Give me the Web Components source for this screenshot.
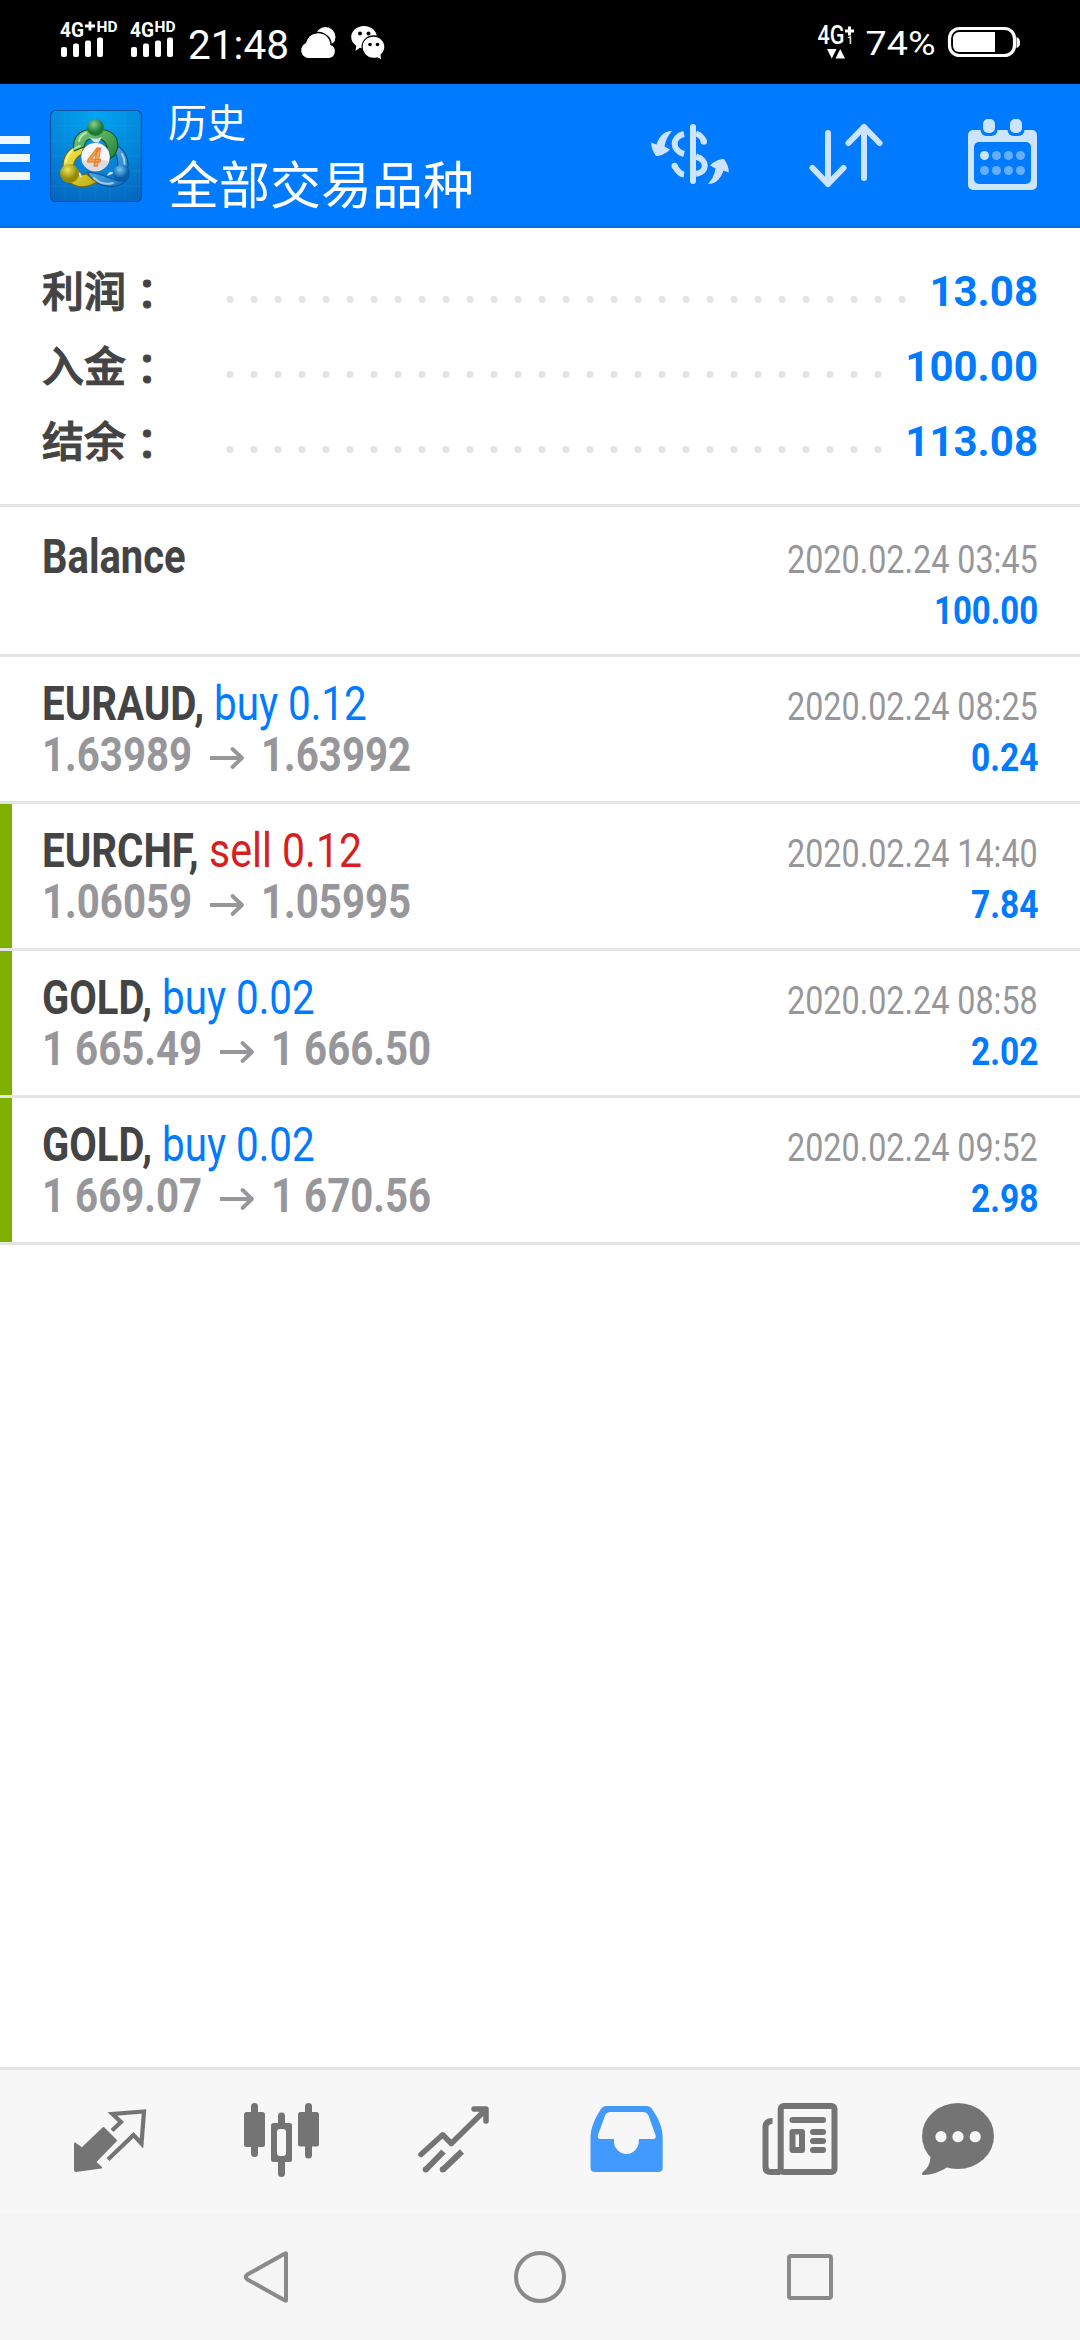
<!DOCTYPE html>
<html lang="zh-CN">
<head>
<meta charset="utf-8">
<title>历史</title>
<style>
html,body{margin:0;padding:0;background:#fff}
body{width:1080px;height:2340px;overflow:hidden;font-family:Roboto,"Noto Sans CJK SC",sans-serif}
</style>
</head>
<body>
<trade-app></trade-app>
<script>
const define = (name, css, html, extra) => {
  const tpl = document.createElement('template');
  tpl.innerHTML = `<style>*{box-sizing:border-box}svg{display:block}${css}</style>${html}`;
  customElements.define(name, class extends HTMLElement {
    connectedCallback() {
      if (this.shadowRoot) return;
      this.attachShadow({mode: 'open'}).appendChild(tpl.content.cloneNode(true));
      if (extra) extra(this, this.shadowRoot);
    }
  });
};

/* Condensed text: squeezes its content horizontally to the width in "w". */
define('cond-text',
  `:host{display:inline-block;white-space:pre}
   span{display:inline-block;transform-origin:0 50%}`,
  `<span><slot></slot></span>`,
  (host, root) => {
    const s = root.querySelector('span');
    const w = +host.getAttribute('w');
    host.style.width = w + 'px';
    s.style.transform = `scaleX(${w / s.offsetWidth})`;
  });

define('status-bar',
  `:host{display:flex;justify-content:space-between;height:84px;background:#000;flex:none}
   text{font-family:Roboto,sans-serif;fill:#fff}`,
  `<svg width="400" height="84" viewBox="0 0 400 84" fill="#fff">
    <text x="60" y="37" font-size="21" font-weight="700" textLength="24" lengthAdjust="spacingAndGlyphs">4G</text>
    <path d="M85 26h10M90 21.500v9" stroke="#fff" stroke-width="2.800"/>
    <text x="96.500" y="32" font-size="14" font-weight="700" textLength="21" lengthAdjust="spacingAndGlyphs">HD</text>
    <g id="b"><rect x="61" y="47" width="6" height="10" rx="2"/><rect x="73" y="43.500" width="6" height="13.500" rx="2"/><rect x="85" y="40.500" width="6" height="16.500" rx="2"/><rect x="97" y="37.500" width="6" height="19.500" rx="2"/></g>
    <text x="130" y="37" font-size="21" font-weight="700" textLength="24" lengthAdjust="spacingAndGlyphs">4G</text>
    <text x="154.500" y="32" font-size="14" font-weight="700" textLength="21" lengthAdjust="spacingAndGlyphs">HD</text>
    <use href="#b" x="70"/>
    <text x="188" y="59" font-size="40.500" textLength="101" lengthAdjust="spacingAndGlyphs">21:48</text>
    <circle cx="325.500" cy="37" r="10"/>
    <path d="M309.500 58a7.800 7.800 0 0 1-3.500-15 12.500 12.500 0 0 1 23-3.500c1 2 1.300 3.500 1.300 5.500a6.700 6.700 0 0 1-1.300 13z" stroke="#000" stroke-width="3" paint-order="stroke"/>
    <path d="M331 44l4 2v-4z" fill="#000"/>
    <path d="M364 26c7.500 0 12.800 5 12.800 11s-5.300 11.500-12.800 11.500c-1.500 0-3-.3-4.200-.7L355.500 51l.7-5.200c-3-2-5-5-5-8.800 0-6 5.500-11 12.800-11z"/>
    <ellipse cx="373.500" cy="47" rx="12" ry="11.800" fill="#000"/>
    <path d="M373.500 36.800c6.200 0 10.800 4.500 10.800 10 0 3.300-1.500 6-3.800 7.900l.6 4.500-3.800-2c-1.200.4-2.500.6-3.800.6-6.200 0-10.800-5-10.800-11s4.600-10 10.800-10z"/>
    <g fill="#000"><circle cx="360" cy="33.500" r="2"/><circle cx="368.500" cy="33.500" r="2"/><circle cx="370" cy="44.500" r="1.800"/><circle cx="377.500" cy="44.500" r="1.800"/></g>
  </svg>
  <svg width="280" height="84" viewBox="800 0 280 84" fill="#fff">
    <text x="817.500" y="44" font-size="25" font-weight="500" textLength="27" lengthAdjust="spacingAndGlyphs">4G</text>
    <path d="M845 31h9M849.500 26.500v9" stroke="#fff" stroke-width="3"/>
    <text x="847" y="44" font-size="10.500" font-weight="500">1</text>
    <path d="M827 49h9.500l-4.750 9.500zM835.500 58.500h9.500l-4.750-9.500z"/>
    <text x="865.500" y="55" font-size="34" textLength="70" lengthAdjust="spacingAndGlyphs">74%</text>
    <rect x="949.500" y="28.500" width="65" height="27" rx="10" fill="none" stroke="#fff" stroke-width="3.200"/>
    <path d="M995 32h-36a6 6 0 0 0-6 6v8a6 6 0 0 0 6 6h36z"/>
    <path d="M1016.500 37q3.500 1 3.500 5.500t-3.500 5.500z"/>
  </svg>`);

define('app-logo',
  `:host{display:block;width:94px;height:94px}`,
  `<svg width="94" height="94" viewBox="49 109 94 94">
    <defs>
      <radialGradient id="bg" cx=".5" cy="0" r="1.050"><stop offset="0" stop-color="#00a6f2"/><stop offset=".5" stop-color="#0489dc"/><stop offset="1" stop-color="#0568c0"/></radialGradient>
      <linearGradient id="g" x2="1" y2="1"><stop offset="0" stop-color="#7fd07f"/><stop offset="1" stop-color="#1d7c30"/></linearGradient>
      <linearGradient id="y" x2="1" y2="1"><stop offset="0" stop-color="#fbee4a"/><stop offset="1" stop-color="#b9aa18"/></linearGradient>
      <linearGradient id="u" x2="1" y2="1"><stop offset="0" stop-color="#6fccf7"/><stop offset="1" stop-color="#0f6cbf"/></linearGradient>
      <radialGradient id="gs" cx=".4" cy=".3"><stop offset="0" stop-color="#86cf8d"/><stop offset="1" stop-color="#1c7a37"/></radialGradient>
      <radialGradient id="ys" cx=".4" cy=".3"><stop offset="0" stop-color="#efe75c"/><stop offset="1" stop-color="#938a0a"/></radialGradient>
      <radialGradient id="us" cx=".4" cy=".3"><stop offset="0" stop-color="#6fc9f3"/><stop offset="1" stop-color="#0a5cab"/></radialGradient>
    </defs>
    <rect x="50.500" y="110.500" width="91" height="91" rx="5" fill="url(#bg)" stroke="#07509f" stroke-width="1.200"/>
    <path d="M65 111v90M80 111v90M95 111v90M110 111v90M125 111v90M51 126h90M51 141h90M51 156h90M51 171h90M51 186h90" stroke="#45b7f5" stroke-width=".6" opacity=".22"/>
    <g stroke-linejoin="round" stroke-width="1.200">
      <path d="M115 145c8 3 13 11 13 20 0 3-1 5-3 6l-8-3c2-7 0-15-6-20zM87 172c7 1 14 2 20 5l12 4c4 0 7-1 9-3-4 6-11 9-19 8.500-10-1-18-7-22-14.500z" fill="url(#u)" stroke="#0a4f94"/>
      <path d="M85 143c-13 2-22 11-22 22 0 4 2 7 5 8 3-3 5-2 7-1-4-6 0-14 7-18zM66 178c5 8 16 11 25 7l6-3c-5-2-7-5-10-8l-11 2z" fill="url(#y)" stroke="#706a0b"/>
      <path d="M86 130c-10 3-14 11-12 21l10-4c1-5 4-8 7-8h10c5 3 9 9 4 22l9-5c7-11 4-23-9-26z" fill="url(#g)" stroke="#0d5322"/>
    </g>
    <path d="M66 162c1-8 7-14 14-16M122 154q3 5 2.500 10M79 141c1-4 4-7 7-8M94 178c5 5 12 7 19 5" fill="none" stroke="#fff" stroke-width="2" opacity=".55" stroke-linecap="round"/>
    <path d="M75 172q6-2 7 6M114 173q-5-3-7 3M89 137q6 3 13 0l-5 8z" fill="#f4f8ef" opacity=".85"/>
    <circle cx="95.500" cy="127.500" r="8.500" fill="url(#gs)"/>
    <circle cx="69.500" cy="173.500" r="9.500" fill="url(#ys)"/>
    <circle cx="121.500" cy="173" r="8.500" fill="url(#us)"/>
    <circle cx="95.500" cy="157" r="14.600" fill="#f7f6f8" stroke="#0a4a80" stroke-opacity=".45"/>
    <path d="M82 161q13-3 27 0a14 14 0 0 1-27 0z" fill="#dcdce0"/>
    <text x="87.500" y="165.500" font-family="Roboto,sans-serif" font-weight="700" font-style="italic" font-size="25" fill="#f9a94c" stroke="#e0762a" stroke-width=".9">4</text>
  </svg>`);

define('app-header',
  `:host{display:flex;height:144px;flex:none;background:#007aff;border-bottom:3px solid #006fe6;color:#fff}
   .menu{width:30px;margin:52px 19px 0 0;height:44px;display:flex;flex-direction:column;justify-content:space-between}
   .menu i{height:8px;background:#f0f7ff}
   app-logo{margin-top:25px}
   .t{margin:12px 0 0 25px;flex:1;font-family:"Noto Sans CJK SC",sans-serif}
   .a{font-size:39px;line-height:48px}.b{font-size:51px;line-height:72px;margin-top:2px}`,
  `<div class="menu"><i></i><i></i><i></i></div>
  <app-logo></app-logo>
  <div class="t"><div class="a">历史</div><div class="b">全部交易品种</div></div>
  <svg width="450" height="141" viewBox="630 84 450 141" fill="none" stroke="#cce4ff" stroke-width="6" stroke-linecap="round" stroke-linejoin="round">
    <path d="M693 127v54"/>
    <path d="M684 134C671.500 137 671.500 150.500 684 154M684 174.500Q679 174 675 166.500M696 133.500Q702 135.500 704 141.500M696 156.500C708 160 707.500 172 696 174" stroke-linecap="butt"/>
    <circle cx="674.700" cy="166" r="3.200" fill="#cce4ff" stroke="none"/><circle cx="703.800" cy="141.500" r="3.200" fill="#cce4ff" stroke="none"/>
    <g fill="#cce4ff" stroke="none"><path id="ar" d="M672 131C663.500 131 659 137 656.500 144.500L651.200 142.500C651 147 653 152 656 156 661 156 666 153.500 670 149.500L664.500 146.500C665.500 140 668 135.500 672 131z"/>
    <use href="#ar" transform="rotate(180 690 157.500)"/></g>
    <path d="M828 133v51M812.500 168l15.500 16 15.500-16M864 178v-51M848.500 143l15.500-16 15.500 16"/>
    <g stroke="none"><rect x="968" y="130" width="69" height="60" rx="5" fill="#cce4ff"/>
    <rect x="974" y="142" width="57" height="42" rx="5" fill="#007aff"/>
    <rect x="980.500" y="116" width="17" height="20" rx="6" fill="#007aff"/><rect x="1007.500" y="116" width="17" height="20" rx="6" fill="#007aff"/>
    <rect x="983" y="119" width="12" height="14" rx="5" fill="#cce4ff"/><rect x="1010" y="119" width="12" height="14" rx="5" fill="#cce4ff"/>
    <g fill="#66afff"><circle cx="984.500" cy="155.500" r="4.500" fill="#cce4ff"/><circle cx="996.500" cy="155.500" r="4.500"/><circle cx="1008.500" cy="155.500" r="4.500"/><circle cx="1020.500" cy="155.500" r="4.500"/><circle cx="984.500" cy="170.500" r="4.500"/><circle cx="996.500" cy="170.500" r="4.500"/><circle cx="1008.500" cy="170.500" r="4.500"/><circle cx="1020.500" cy="170.500" r="4.500"/></g></g>
  </svg>`);

define('summary-row',
  `:host{display:flex;height:75px;padding:0 42px}
   .l{display:flex;width:176px;font:500 42px/69px "Noto Sans CJK SC",sans-serif;color:#444;-webkit-text-stroke:1.100px #444}
   .c{font-family:"Noto Sans CJK TC",sans-serif;padding-top:3px}
   .d{flex:1;margin-right:16px;background:radial-gradient(circle 4px at 12px 45.500px,#e4e4e4 3.200px,transparent 4px) 0 0/24px 75px repeat-x}
   .v{font:700 42px/75px Roboto,sans-serif;color:#007aff}`,
  `<div class="l"><span><slot></slot></span><span class="c" lang="zh-TW">：</span></div><div class="d"></div><div class="v"><slot name="value"></slot></div>`);

define('deal-row',
  `:host{display:flex;justify-content:space-between;height:147px;padding:21px 42px 0;border-bottom:3px solid #e4e4e4;flex:none}
   :host([first]){height:150px;padding-top:24px}
   :host([mark]){background:linear-gradient(#7fb000,#7fb000) 0 0/12px 144px no-repeat}
   .l{font-size:48px;line-height:51px}
   .r{font-size:39px;line-height:51px;text-align:right;padding-top:4px;display:flex;flex-direction:column;align-items:flex-end}
   .row{display:flex;height:51px}
   .sym{font-weight:700;color:#444;margin-right:10px}.buy{color:#007aff}.sell{color:#d81f1f}
   .p{font-weight:700;color:#97979b}.p svg{margin:0 16px 0 17px}
   .time{color:#97979b}.profit{color:#007aff;font-weight:700}`,
  ``,
  (host, root) => {
    const a = n => host.getAttribute(n);
    const ct = (cls, txt, w) => `<cond-text class="${cls}" w="${w}">${txt}</cond-text>`;
    let left = `<div class="row">${ct('sym', a('symbol'), a('sw'))}`;
    if (a('side')) {
      left += ct(a('side'), `${a('side')} ${a('volume')}`, 153) + '</div>';
      left += `<div class="row p">${ct('', a('open'), a('pw'))}<svg width="36" height="51" viewBox="0 0 36 51" fill="none" stroke="#97979b"><path d="M1 29h31" stroke-width="4"/><path d="M23.500 20L33 29 23.500 38" stroke-width="3.800" stroke-linejoin="round" stroke-linecap="round"/></svg>${ct('', a('close'), a('pw'))}`;
    }
    const box = document.createElement('template');
    box.innerHTML = `<div class="l">${left}</div></div><div class="r">${ct('time', '2020.02.24 ' + a('time'), 251)}${ct('profit', a('profit'), a('profit').length > 4 ? 104 : 67)}</div>`;
    root.appendChild(box.content);
  });

define('tab-bar',
  `:host{display:flex;height:147px;flex:none;background:#f7f7f7;border-top:3px solid #e4e4e4;padding-left:24px}
   svg{flex:none;color:#747474;fill:currentColor}.on{color:#429aff}
   .s{fill:none;stroke:currentColor;stroke-width:6;stroke-linecap:round;stroke-linejoin:round}.w{fill:#f7f7f7}`,
  `<svg width="173" height="144" viewBox="24 2070 173 144">
    <path d="M75 2143.500l7 5 21.500-20.500 12.500 12.500-21 21.500 6 5.500-25 3.500q-1 0-1-1z" stroke="currentColor" stroke-width="2" stroke-linejoin="round"/>
    <path class="s" style="stroke-width:4.200;stroke-linecap:butt;stroke-linejoin:miter" d="M112 2130.500l9-8.500-8.500-8 31.500-2.500-2.500 32-8-8.500-25.500 24.500"/></svg>
  <svg width="173" height="144" viewBox="197 2070 173 144">
    <rect x="244" y="2112" width="21" height="35" rx="2.500"/><rect x="251" y="2103" width="7" height="54" rx="3.500"/>
    <rect x="278" y="2112.500" width="7" height="64.500" rx="3.500"/><rect x="271" y="2123" width="21" height="39" rx="2.500"/><rect class="w" x="277" y="2129" width="9" height="27" rx="3"/>
    <rect x="298" y="2112" width="21" height="34.500" rx="2.500"/><rect x="305" y="2103" width="7" height="55.500" rx="3.500"/></svg>
  <svg width="173" height="144" viewBox="370 2070 173 144">
    <path class="s" style="stroke-width:5.500" d="M421 2154.500l21.700-19.700 8.600 8.700 34.500-34M474 2109h12v12"/>
    <path class="s" style="stroke-linecap:butt" d="M425.500 2170l18-18.500M442.500 2170l19.500-18.500"/><circle cx="425.700" cy="2169.500" r="3"/><circle cx="442.700" cy="2169.500" r="3"/></svg>
  <svg class="on" width="173" height="144" viewBox="543 2070 173 144">
    <path d="M606.500 2106h40q3.500 0 5.500 3c7 10 10.700 19 10.700 29v29.500q0 4.500-4.500 4.500h-63.200q-4.500 0-4.500-4.500V2138c0-10 4-19 10.500-29q2-3 5.500-3z"/>
    <path class="w" d="M610.500 2112h32.500q4 0 5.500 3.500l7 19.500q1 4-2.500 4h-14.200v2.500a12.300 12.300 0 0 1-24.800 0V2139h-13.500q-3.500 0-2.500-4l7-19.500q1.500-3.500 5.500-3.500z"/></svg>
  <svg width="173" height="144" viewBox="716 2070 173 144">
    <rect class="s" x="780.700" y="2106" width="53.800" height="66" rx="3"/>
    <path class="s" style="stroke-linecap:butt" d="M772.500 2121q-7 0-7 6v40q0 5 5 5h10"/>
    <rect x="789.500" y="2117" width="36.500" height="6" rx="3"/><rect x="789.500" y="2129" width="15.500" height="24" rx="3"/><rect class="w" x="795.500" y="2134.500" width="3.500" height="12.500"/>
    <rect x="810" y="2129" width="16" height="6" rx="3"/><rect x="810" y="2138" width="16" height="6" rx="3"/><rect x="810" y="2147" width="16" height="6" rx="3"/></svg>
  <svg width="167" height="144" viewBox="889 2070 167 144">
    <ellipse cx="958" cy="2136" rx="36" ry="33"/>
    <path d="M930.500 2157q-.5 10-8 15.500-1.500 2.500 1 2.500 12 0 25-8.500z"/>
    <g class="w"><circle cx="941" cy="2136.700" r="5.600"/><circle cx="958" cy="2136.700" r="5.600"/><circle cx="975.200" cy="2136.700" r="5.600"/></g></svg>`);

define('nav-bar',
  `:host{display:flex;justify-content:center;height:126px;flex:none;background:#f5f5f5}
   svg{width:270px;height:126px;fill:none;stroke:#8a8a8a;stroke-width:4;stroke-linejoin:round}`,
  `<svg viewBox="135 2214 270 126"><path d="M286 2253.500v47q0 .5-1 0L247.500 2279.500q-3.500-2.500 0-5L285 2253.500q1-.5 1 0z"/></svg>
  <svg viewBox="405 2214 270 126"><circle cx="540" cy="2277" r="24"/></svg>
  <svg viewBox="675 2214 270 126"><rect x="789" y="2256" width="42" height="42" rx="2"/></svg>`);

define('trade-app',
  `:host{display:flex;flex-direction:column;width:1080px;height:2340px;background:#fff}
   .sum{height:279px;padding-top:26px;border-bottom:3px solid #e4e4e4;flex:none}
   .gap{flex:1}`,
  `<status-bar></status-bar>
  <app-header></app-header>
  <div class="sum">
    <summary-row>利润<span slot="value">13.08</span></summary-row>
    <summary-row>入金<span slot="value">100.00</span></summary-row>
    <summary-row>结余<span slot="value">113.08</span></summary-row>
  </div>
  <deal-row first symbol="Balance" sw="144" time="03:45" profit="100.00"></deal-row>
  <deal-row symbol="EURAUD," sw="162" side="buy" volume="0.12" open="1.63989" close="1.63992" pw="150" time="08:25" profit="0.24"></deal-row>
  <deal-row mark symbol="EURCHF," sw="157" side="sell" volume="0.12" open="1.06059" close="1.05995" pw="150" time="14:40" profit="7.84"></deal-row>
  <deal-row mark symbol="GOLD," sw="110" side="buy" volume="0.02" open="1 665.49" close="1 666.50" pw="160" time="08:58" profit="2.02"></deal-row>
  <deal-row mark symbol="GOLD," sw="110" side="buy" volume="0.02" open="1 669.07" close="1 670.56" pw="160" time="09:52" profit="2.98"></deal-row>
  <div class="gap"></div>
  <tab-bar></tab-bar>
  <nav-bar></nav-bar>`);
</script>
</body>
</html>
